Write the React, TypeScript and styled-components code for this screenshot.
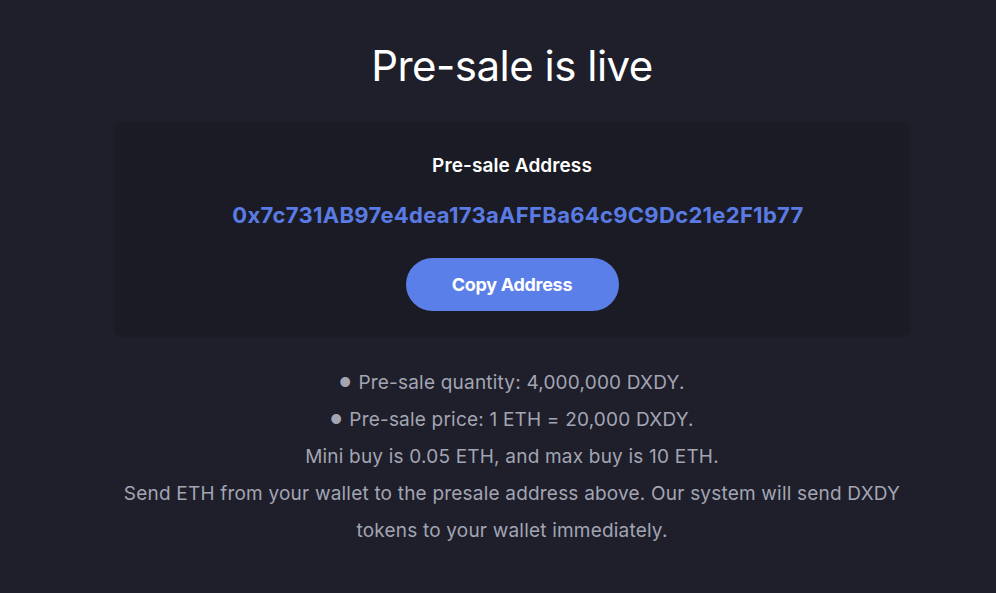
import React from "react";
import styled, { createGlobalStyle } from "styled-components";

const Global = createGlobalStyle`
  html, body { margin: 0; padding: 0; background: #1e1f2b; }
  body { font-family: Inter, "Noto Sans", sans-serif; }
`;

const Page = styled.main`
  min-height: 593px;
  background: #1e1f2b;
  display: flex;
  flex-direction: column;
  align-items: center;
  padding-top: 38px;
  padding-left: 28px;
  box-sizing: border-box;
`;

const Title = styled.h1`
  margin: 0;
  color: #ffffff;
  font-size: 42px;
  font-weight: 400;
  line-height: 56px;
  letter-spacing: -0.5px;
`;

const Card = styled.section`
  margin-top: 29px;
  width: 794px;
  height: 213px;
  box-sizing: border-box;
  background: #1b1b25;
  border-radius: 7px;
  box-shadow: 0 0 3px rgba(0, 0, 0, 0.25);
  display: flex;
  flex-direction: column;
  align-items: center;
  padding-top: 31px;
`;

const CardTitle = styled.div`
  color: #ffffff;
  font-size: 19px;
  font-weight: 600;
  line-height: 24px;
  letter-spacing: 0.1px;
`;

const Address = styled.div`
  margin-top: 23px;
  padding-left: 12px;
  color: #5a7be4;
  font-size: 22px;
  font-weight: 700;
  line-height: 28px;
  letter-spacing: 0.3px;
`;

const CopyButton = styled.button`
  margin-top: 29px;
  width: 213px;
  height: 53px;
  border: none;
  border-radius: 27px;
  background: #5b7fe9;
  color: #ffffff;
  font-family: Inter, "Noto Sans", sans-serif;
  font-size: 18px;
  font-weight: 700;
  letter-spacing: -0.3px;
  cursor: pointer;
`;

const Info = styled.div`
  margin-top: 28px;
  width: 800px;
  text-align: center;
  color: #a3a5b3;
  font-size: 19px;
  line-height: 37px;
  letter-spacing: 0.2px;
`;

const Line = styled.p`
  margin: 0;
`;

const Bullet = styled.span`
  display: inline-block;
  font-size: 13px;
  vertical-align: 2px;
  margin-right: 7px;
`;

export default function App() {
  return (
    <>
      <Global />
      <Page>
        <Title>Pre-sale is live</Title>
        <Card>
          <CardTitle>Pre-sale Address</CardTitle>
          <Address>0x7c731AB97e4dea173aAFFBa64c9C9Dc21e2F1b77</Address>
          <CopyButton>Copy Address</CopyButton>
        </Card>
        <Info>
          <Line>
            <Bullet>●</Bullet>Pre-sale quantity: 4,000,000 DXDY.
          </Line>
          <Line>
            <Bullet>●</Bullet>Pre-sale price: 1 ETH = 20,000 DXDY.
          </Line>
          <Line>Mini buy is 0.05 ETH, and max buy is 10 ETH.</Line>
          <Line>
            Send ETH from your wallet to the presale address above. Our system will send DXDY tokens to your wallet immediately.
          </Line>
        </Info>
      </Page>
    </>
  );
}
